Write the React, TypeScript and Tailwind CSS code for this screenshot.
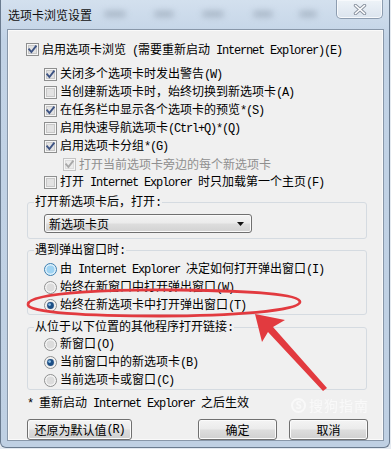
import React from "react";

const MONO = "font-['Liberation_Mono',monospace] text-[12px] tracking-[-1.2px] whitespace-pre";

function T({ s }: { s: string }) {
  const parts = s.split(/([\x20-\x7e]+)/);
  return (
    <>
      {parts.map((p, i) =>
        p === "" ? null : /^[\x20-\x7e]+$/.test(p) ? (
          <span key={i} className={MONO}>
            {p}
          </span>
        ) : (
          <span key={i}>{p}</span>
        )
      )}
    </>
  );
}

function CheckBox({ checked, disabled }: { checked?: boolean; disabled?: boolean }) {
  const outer = disabled ? "#c4c4c4" : "#8e8f8f";
  const inner = disabled ? "#ececec" : "#e2e2e2";
  const innerStroke = disabled ? "#dcdcdc" : "#c8c8c8";
  const mark = disabled ? "#a8a8a8" : "#3d5383";
  return (
    <svg width="13" height="13" viewBox="0 0 13 13" className="shrink-0">
      <rect x="0.5" y="0.5" width="12" height="12" fill="#f6f6f6" stroke={outer} />
      <rect x="2.5" y="2.5" width="8" height="8" fill={inner} stroke={innerStroke} />
      {checked && (
        <path d="M3.2 6.4 L5.4 9 L9.8 3.4" fill="none" stroke={mark} strokeWidth="1.9" strokeLinecap="square" />
      )}
    </svg>
  );
}

function Radio({ checked, hover }: { checked?: boolean; hover?: boolean }) {
  return (
    <svg width="13" height="13" viewBox="0 0 13 13" className="shrink-0">
      <circle cx="6.5" cy="6.5" r="6" fill={hover ? "#dff1fb" : "#f4f4f4"} stroke={hover ? "#3c7fb1" : "#8e8f8f"} />
      <circle cx="6.5" cy="6.5" r="4" fill={hover ? "#9fd3f2" : "#dcdcdc"} />
      {checked && (
        <>
          <circle cx="6.5" cy="6.5" r="3.4" fill="#1d4f86" />
          <circle cx="5.6" cy="5.6" r="1.4" fill="#8fc0e6" />
        </>
      )}
    </svg>
  );
}

function CheckRow({ label, checked, disabled, pl }: { label: string; checked?: boolean; disabled?: boolean; pl: string }) {
  return (
    <div className={`flex items-center h-[18px] gap-[3px] ${pl} ${disabled ? "text-[#8f8f8f]" : "text-black"}`}>
      <CheckBox checked={checked} disabled={disabled} />
      <span className="leading-[14px] whitespace-nowrap">
        <T s={label} />
      </span>
    </div>
  );
}

function RadioRow({ label, checked, hover }: { label: string; checked?: boolean; hover?: boolean }) {
  return (
    <div className="flex items-center h-[18px] gap-[3px] pl-[16px]">
      <Radio checked={checked} hover={hover} />
      <span className="leading-[14px] whitespace-nowrap">
        <T s={label} />
      </span>
    </div>
  );
}

function Btn({ label, w }: { label: string; w: string }) {
  return (
    <div
      className={`${w} h-[21px] rounded-[3px] border border-[#707070] flex items-center justify-center leading-[14px] bg-[linear-gradient(#f4f4f4,#ebebeb_48%,#dddddd_52%,#d0d0d0)] shadow-[inset_0_0_0_1px_#fbfbfb]`}
    >
      <T s={label} />
    </div>
  );
}

export default function App() {
  return (
    <div className="w-[391px] h-[449px] bg-[#e4eaf1] relative overflow-hidden font-['Noto_Sans_CJK_SC',sans-serif] text-[12px] text-black">
      <div className="w-[390px] h-[448px] border-x border-b border-[#6a7b8f] rounded-b-[6px] bg-[linear-gradient(#d3e0ee,#c2d3e6_40px,#bfd0e3)] relative flex flex-col">
        {/* title bar */}
        <div className="h-[29px] flex items-center pl-[7px] relative shrink-0">
          <span className="leading-[14px] text-[#111]">选项卡浏览设置</span>
          <div className="absolute top-[11px] left-[103px] w-[22px] h-[6px] rounded-full bg-[#8d9bab] blur-[3px] opacity-60" />
          <div className="absolute top-[11px] left-[153px] w-[20px] h-[6px] rounded-full bg-[#8d9bab] blur-[3px] opacity-60" />
          <div className="absolute top-[11px] left-[201px] w-[22px] h-[6px] rounded-full bg-[#8d9bab] blur-[3px] opacity-60" />
          <div className="absolute top-[11px] left-[252px] w-[20px] h-[6px] rounded-full bg-[#8d9bab] blur-[3px] opacity-60" />
          <div className="absolute top-[11px] left-[298px] w-[18px] h-[6px] rounded-full bg-[#8d9bab] blur-[3px] opacity-60" />
          <div className="absolute top-0 right-[6px] w-[47px] h-[19px] border-x border-b border-[#8d9db0] rounded-b-[5px] bg-[linear-gradient(#eef3f8,#dbe4ee)] shadow-[inset_0_0_0_1px_#f7f9fc] flex items-center justify-center">
            <svg width="14" height="11" viewBox="0 0 14 11">
              <path d="M2.5 1.5 L11.5 9.5 M11.5 1.5 L2.5 9.5" stroke="#8a93a0" strokeWidth="3.4" strokeLinecap="round" />
              <path d="M2.5 1.5 L11.5 9.5 M11.5 1.5 L2.5 9.5" stroke="#ffffff" strokeWidth="1.6" strokeLinecap="round" />
            </svg>
          </div>
        </div>

        {/* content panel */}
        <div className="ml-[6px] w-[377px] h-[412px] border border-[#8897a9] bg-[#f0f0f0] shadow-[inset_0_0_0_1px_#fafafa] flex flex-col pt-[11px]">
          <CheckRow pl="pl-[18px]" checked label="启用选项卡浏览 (需要重新启动 Internet Explorer)(E)" />
          <div className="mt-[7px] flex flex-col">
            <CheckRow pl="pl-[36px]" checked label="关闭多个选项卡时发出警告(W)" />
            <CheckRow pl="pl-[36px]" label="当创建新选项卡时，始终切换到新选项卡(A)" />
            <CheckRow pl="pl-[36px]" checked label="在任务栏中显示各个选项卡的预览*(S)" />
            <CheckRow pl="pl-[36px]" label="启用快速导航选项卡(Ctrl+Q)*(Q)" />
            <CheckRow pl="pl-[36px]" checked label="启用选项卡分组*(G)" />
            <CheckRow pl="pl-[55px]" checked disabled label="打开当前选项卡旁边的每个新选项卡" />
            <CheckRow pl="pl-[36px]" label="打开 Internet Explorer 时只加载第一个主页(F)" />
          </div>

          <fieldset className="mt-[3px] ml-[19px] w-[340px] border border-[#d5dbe1] rounded-[3px] pb-[5px] pt-[4px]">
            <legend className="ml-[6px] px-[1px] leading-[14px]">
              <T s="打开新选项卡后，打开:" />
            </legend>
            <div className="ml-[16px] w-[208px] h-[19px] rounded-[3px] border border-[#707070] bg-[linear-gradient(#f3f3f3,#ebebeb_48%,#dddddd_52%,#d2d2d2)] shadow-[inset_0_0_0_1px_#fafafa] flex items-center pl-[4px] pr-[7px]">
              <span className="leading-[14px] flex-1">新选项卡页</span>
              <svg width="7" height="4" viewBox="0 0 7 4">
                <path d="M0 0 H7 L3.5 4 Z" fill="#111" />
              </svg>
            </div>
          </fieldset>

          <fieldset className="mt-[3px] ml-[19px] w-[340px] border border-[#d5dbe1] rounded-[3px] pt-[2px]">
            <legend className="ml-[6px] px-[1px] leading-[14px]">
              <T s="遇到弹出窗口时:" />
            </legend>
            <RadioRow hover label="由 Internet Explorer 决定如何打开弹出窗口(I)" />
            <RadioRow label="始终在新窗口中打开弹出窗口(W)" />
            <RadioRow checked label="始终在新选项卡中打开弹出窗口(T)" />
          </fieldset>

          <fieldset className="mt-[4px] ml-[19px] w-[340px] border border-[#d5dbe1] rounded-[3px]">
            <legend className="ml-[6px] px-[1px] leading-[14px]">
              <T s="从位于以下位置的其他程序打开链接:" />
            </legend>
            <RadioRow label="新窗口(O)" />
            <RadioRow checked label="当前窗口中的新选项卡(B)" />
            <RadioRow label="当前选项卡或窗口(C)" />
          </fieldset>

          <div className="mt-[5px] pl-[19px] leading-[14px] whitespace-nowrap">
            <T s="* 重新启动 Internet Explorer 之后生效" />
          </div>

          <div className="mt-[8px] flex pl-[19px] pr-[15px]">
            <Btn w="w-[105px]" label="还原为默认值(R)" />
            <div className="ml-auto flex gap-[12px]">
              <Btn w="w-[79px]" label="确定" />
              <Btn w="w-[79px]" label="取消" />
            </div>
          </div>
        </div>
      </div>

      {/* watermark */}
      <div className="absolute left-[291px] top-[397px] flex items-center gap-[3px] text-white opacity-60 pointer-events-none">
        <span className="w-[15px] h-[15px] rounded-full border-2 border-white flex items-center justify-center text-[10px] font-bold leading-none">S</span>
        <span className="text-[14px] leading-[16px] tracking-[1px]">搜狗指南</span>
      </div>

      {/* red annotation */}
      <svg className="absolute inset-0 pointer-events-none" width="391" height="449" viewBox="0 0 391 449">
        <path
          d="M28 304 C 30 292, 120 289, 180 290 C 250 291, 300 294, 300 302 C 300 311, 230 316, 160 316 C 90 316, 26 313, 28 304 Z"
          fill="none"
          stroke="#e23a3f"
          strokeWidth="2.8"
        />
        <path
          d="M255 314 L285 320 L273 327 L327 388 L323 391 L268 332 L262 342 Z"
          fill="#e23a3f"
        />
      </svg>
    </div>
  );
}
